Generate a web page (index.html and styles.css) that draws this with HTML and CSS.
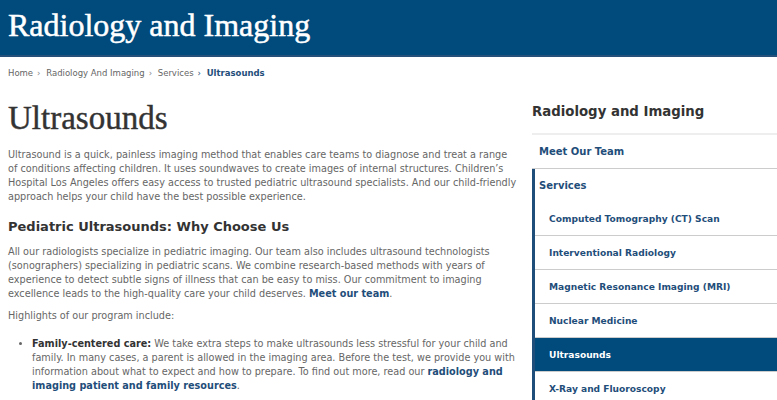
FILE: index.html
```html
<!DOCTYPE html>
<html>
  <head>
    <title>Ultrasounds</title>
    <link rel="stylesheet" href="styles.css">
  </head>
  <body>
    <header class="banner">
      <div class="banner-title">Radiology and Imaging</div>
    </header>
    <nav class="crumbs">
      <a href="#">Home</a><span class="sep">&rsaquo;</span>
      <a href="#">Radiology And Imaging</a><span class="sep">&rsaquo;</span>
      <a href="#">Services</a><span class="sep dark">&rsaquo;</span>
      <span class="current">Ultrasounds</span>
    </nav>
    <div class="layout">
      <main class="content">
        <h1>Ultrasounds</h1>
        <p>Ultrasound is a quick, painless imaging method that enables care teams to diagnose and treat a range of conditions affecting children. It uses soundwaves to create images of internal structures. Children&rsquo;s Hospital Los Angeles offers easy access to trusted pediatric ultrasound specialists. And our child-friendly approach helps your child have the best possible experience.</p>
        <h2>Pediatric Ultrasounds: Why Choose Us</h2>
        <p>All our radiologists specialize in pediatric imaging. Our team also includes ultrasound technologists (sonographers) specializing in pediatric scans. We combine research-based methods with years of experience to detect subtle signs of illness that can be easy to miss. Our commitment to imaging excellence leads to the high-quality care your child deserves. <a href="#">Meet our team</a>.</p>
        <p class="lead">Highlights of our program include:</p>
        <ul>
          <li><strong>Family-centered care:</strong> We take extra steps to make ultrasounds less stressful for your child and family. In many cases, a parent is allowed in the imaging area. Before the test, we provide you with information about what to expect and how to prepare. To find out more, read our <a href="#">radiology and imaging patient and family resources</a>.</li>
        </ul>
      </main>
      <aside class="side">
        <div class="side-title">Radiology and Imaging</div>
        <div class="side-item"><a href="#">Meet Our Team</a></div>
        <div class="side-group">
          <div class="side-item group-head"><a href="#">Services</a></div>
          <div class="side-sub"><a href="#">Computed Tomography (CT) Scan</a></div>
          <div class="side-sub"><a href="#">Interventional Radiology</a></div>
          <div class="side-sub"><a href="#">Magnetic Resonance Imaging (MRI)</a></div>
          <div class="side-sub"><a href="#">Nuclear Medicine</a></div>
          <div class="side-sub active"><a href="#">Ultrasounds</a></div>
          <div class="side-sub"><a href="#">X-Ray and Fluoroscopy</a></div>
        </div>
      </aside>
    </div>
  </body>
</html>
```

FILE: styles.css
```css
body {
  margin: 0;
  font-family: "DejaVu Sans", sans-serif;
  color: #666;
  background: #fff;
  overflow: hidden;
}

a {
  color: #1f4e7a;
  text-decoration: none;
  font-weight: bold;
}

.banner {
  background-color: #004a7c;
  height: 57px;
  border-bottom: 2px solid #24507a;
  padding: 2px 0 0 8px;
  box-sizing: border-box;
}
.banner-title {
  color: #fff;
  font-family: "Liberation Serif", serif;
  font-size: 32px;
  line-height: 46px;
  -webkit-text-stroke: 0.5px #fff;
}

.crumbs {
  padding: 10px 8px 0;
  font-size: 8.5px;
  line-height: 12px;
  color: #666;
}
.crumbs a {
  color: #666;
  font-weight: normal;
}
.crumbs .sep {
  margin: 0 3px 0 4px;
  color: #888;
}
.crumbs .sep.dark {
  color: #1f4e7a;
}
.crumbs .current {
  color: #1f4e7a;
  font-weight: bold;
}

.layout {
  display: grid;
  grid-template-columns: 509px 245px;
  gap: 15px;
  padding-left: 8px;
}

.content h1 {
  font-family: "Liberation Serif", serif;
  font-weight: normal;
  font-size: 33px;
  color: #333;
  margin: 21px 0 12px;
  line-height: 36px;
  -webkit-text-stroke: 0.4px #333;
}
.content p {
  font-size: 9.7px;
  line-height: 14px;
  margin: 0 0 8px;
}
.content h2 {
  font-size: 13px;
  color: #333;
  margin: 14px 0 9px;
  line-height: 18px;
}
.content ul {
  margin: 14px 0 0;
  padding-left: 24px;
  font-size: 9.7px;
  line-height: 14px;
}
.content strong {
  color: #333;
}

.side {
  padding-top: 24px;
}
.side-title {
  font-size: 13.3px;
  font-weight: bold;
  line-height: 18px;
  color: #333;
  padding-bottom: 12px;
  border-bottom: 2px solid #eee;
}
.side-item,
.side-sub {
  height: 33px;
  display: flex;
  align-items: center;
  font-size: 10px;
  border-bottom: 1px solid #ccc;
}
.side-item {
  padding-left: 7px;
}
.side-group {
  border-left: 3px solid #1f4e7a;
}
.side-group .group-head {
  padding-left: 4px;
  border-bottom: none;
}
.side-sub {
  padding-left: 14px;
  font-size: 9.1px;
}
.side-sub.active {
  background-color: #004a7c;
}
.side-sub.active a {
  color: #fff;
}
```
